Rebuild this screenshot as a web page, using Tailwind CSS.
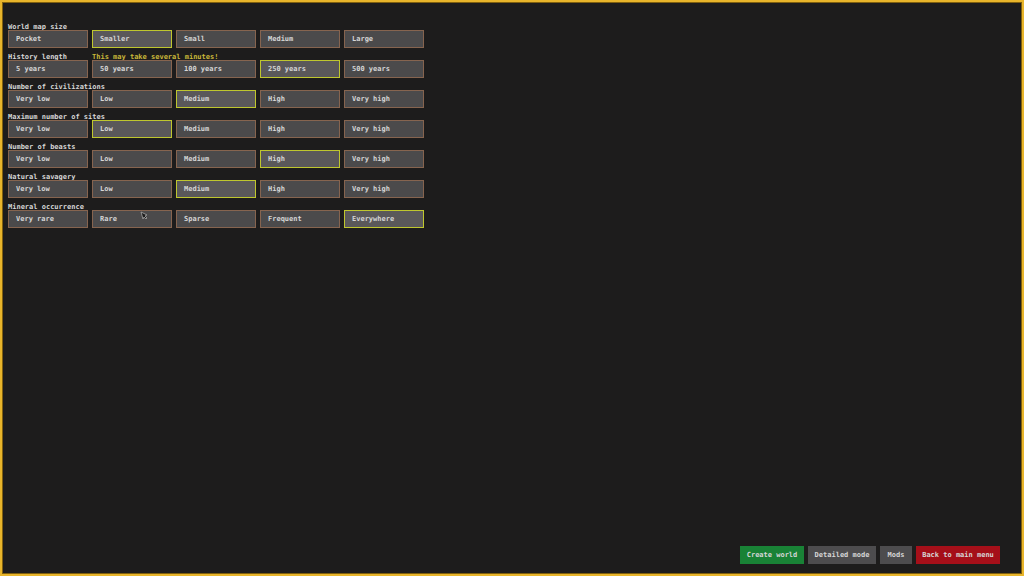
<!DOCTYPE html>
<html lang="en">
  <head>
    <meta charset="UTF-8" />
    <meta name="viewport" content="width=device-width, initial-scale=1.0" />
    <title>Create World</title>
    <script src="https://cdn.jsdelivr.net/npm/@tailwindcss/browser@4"></script>
  </head>
  <body
    class="min-h-screen flex flex-col bg-[#1d1c1c] border-2 border-[#e8b52b] inset-shadow-[0_0_0_1px_#80600f] font-['DejaVu_Sans_Mono','Liberation_Mono',monospace] text-[7px] leading-[10px] font-bold text-[#d6d6d6]"
  >
    <main id="settings" class="grow flex flex-col items-start gap-1 pt-5 px-1.5">
      <!-- Setting rows are inserted here -->
    </main>

    <footer class="flex flex-wrap justify-end gap-1 pr-[22px] pb-2.5 whitespace-nowrap">
      <button type="button" class="w-16 h-[18px] bg-[#198236] hover:bg-[#1f9a41]">Create world</button>
      <button type="button" class="w-17 h-[18px] bg-[#4d4c4e] hover:bg-[#5c5b5d]">Detailed mode</button>
      <button type="button" class="w-8 h-[18px] bg-[#4d4c4e] hover:bg-[#5c5b5d]">Mods</button>
      <button type="button" class="w-21 h-[18px] bg-[#a50f19] hover:bg-[#c01420]">Back to main menu</button>
    </footer>

    <!-- Mouse pointer -->
    <svg class="absolute left-[140px] top-[211px] w-2 h-2 pointer-events-none" viewBox="0 0 8 8" aria-hidden="true">
      <path d="M1 1 L7 4 L5 5 L7 7 L6 8 L4 6 L3 8 Z" fill="#1c1c1c" stroke="#a5a5a5" stroke-width="0.8" />
    </svg>

    <script>
      const levels = ["Very low", "Low", "Medium", "High", "Very high"];
      const settings = [
        { name: "World map size", options: ["Pocket", "Smaller", "Small", "Medium", "Large"], selected: 1 },
        {
          name: "History length",
          options: ["5 years", "50 years", "100 years", "250 years", "500 years"],
          selected: 3,
          note: "This may take several minutes!",
        },
        { name: "Number of civilizations", options: levels, selected: 2 },
        { name: "Maximum number of sites", options: levels, selected: 1 },
        { name: "Number of beasts", options: levels, selected: 3 },
        { name: "Natural savagery", options: levels, selected: 2 },
        {
          name: "Mineral occurrence",
          options: ["Very rare", "Rare", "Sparse", "Frequent", "Everywhere"],
          selected: 4,
        },
      ];

      const container = document.getElementById("settings");

      settings.forEach((setting, i) => {
        const row = document.createElement("section");
        row.setAttribute("role", "group");
        row.setAttribute("aria-labelledby", `setting_${i}`);
        row.innerHTML = `
          <div class="grid grid-cols-[80px_1fr] gap-1 h-2 whitespace-nowrap">
            <h2 id="setting_${i}">${setting.name}</h2>
            ${setting.note ? `<p class="text-[#c9b83a]">${setting.note}</p>` : ""}
          </div>`;

        const options = document.createElement("div");
        options.className = "flex flex-wrap gap-1";
        setting.options.forEach((option, j) => {
          const button = document.createElement("button");
          button.type = "button";
          button.textContent = option;
          button.className =
            "w-20 h-[18px] px-[7px] text-left border bg-[#4b4a4b] border-[#86644f] aria-pressed:bg-[#5a585a] aria-pressed:border-[#bfc62e]";
          button.setAttribute("aria-pressed", j === setting.selected);
          button.addEventListener("click", () => {
            for (const other of options.children) {
              other.setAttribute("aria-pressed", other === button);
            }
          });
          options.appendChild(button);
        });

        row.appendChild(options);
        container.appendChild(row);
      });
    </script>
  </body>
</html>
